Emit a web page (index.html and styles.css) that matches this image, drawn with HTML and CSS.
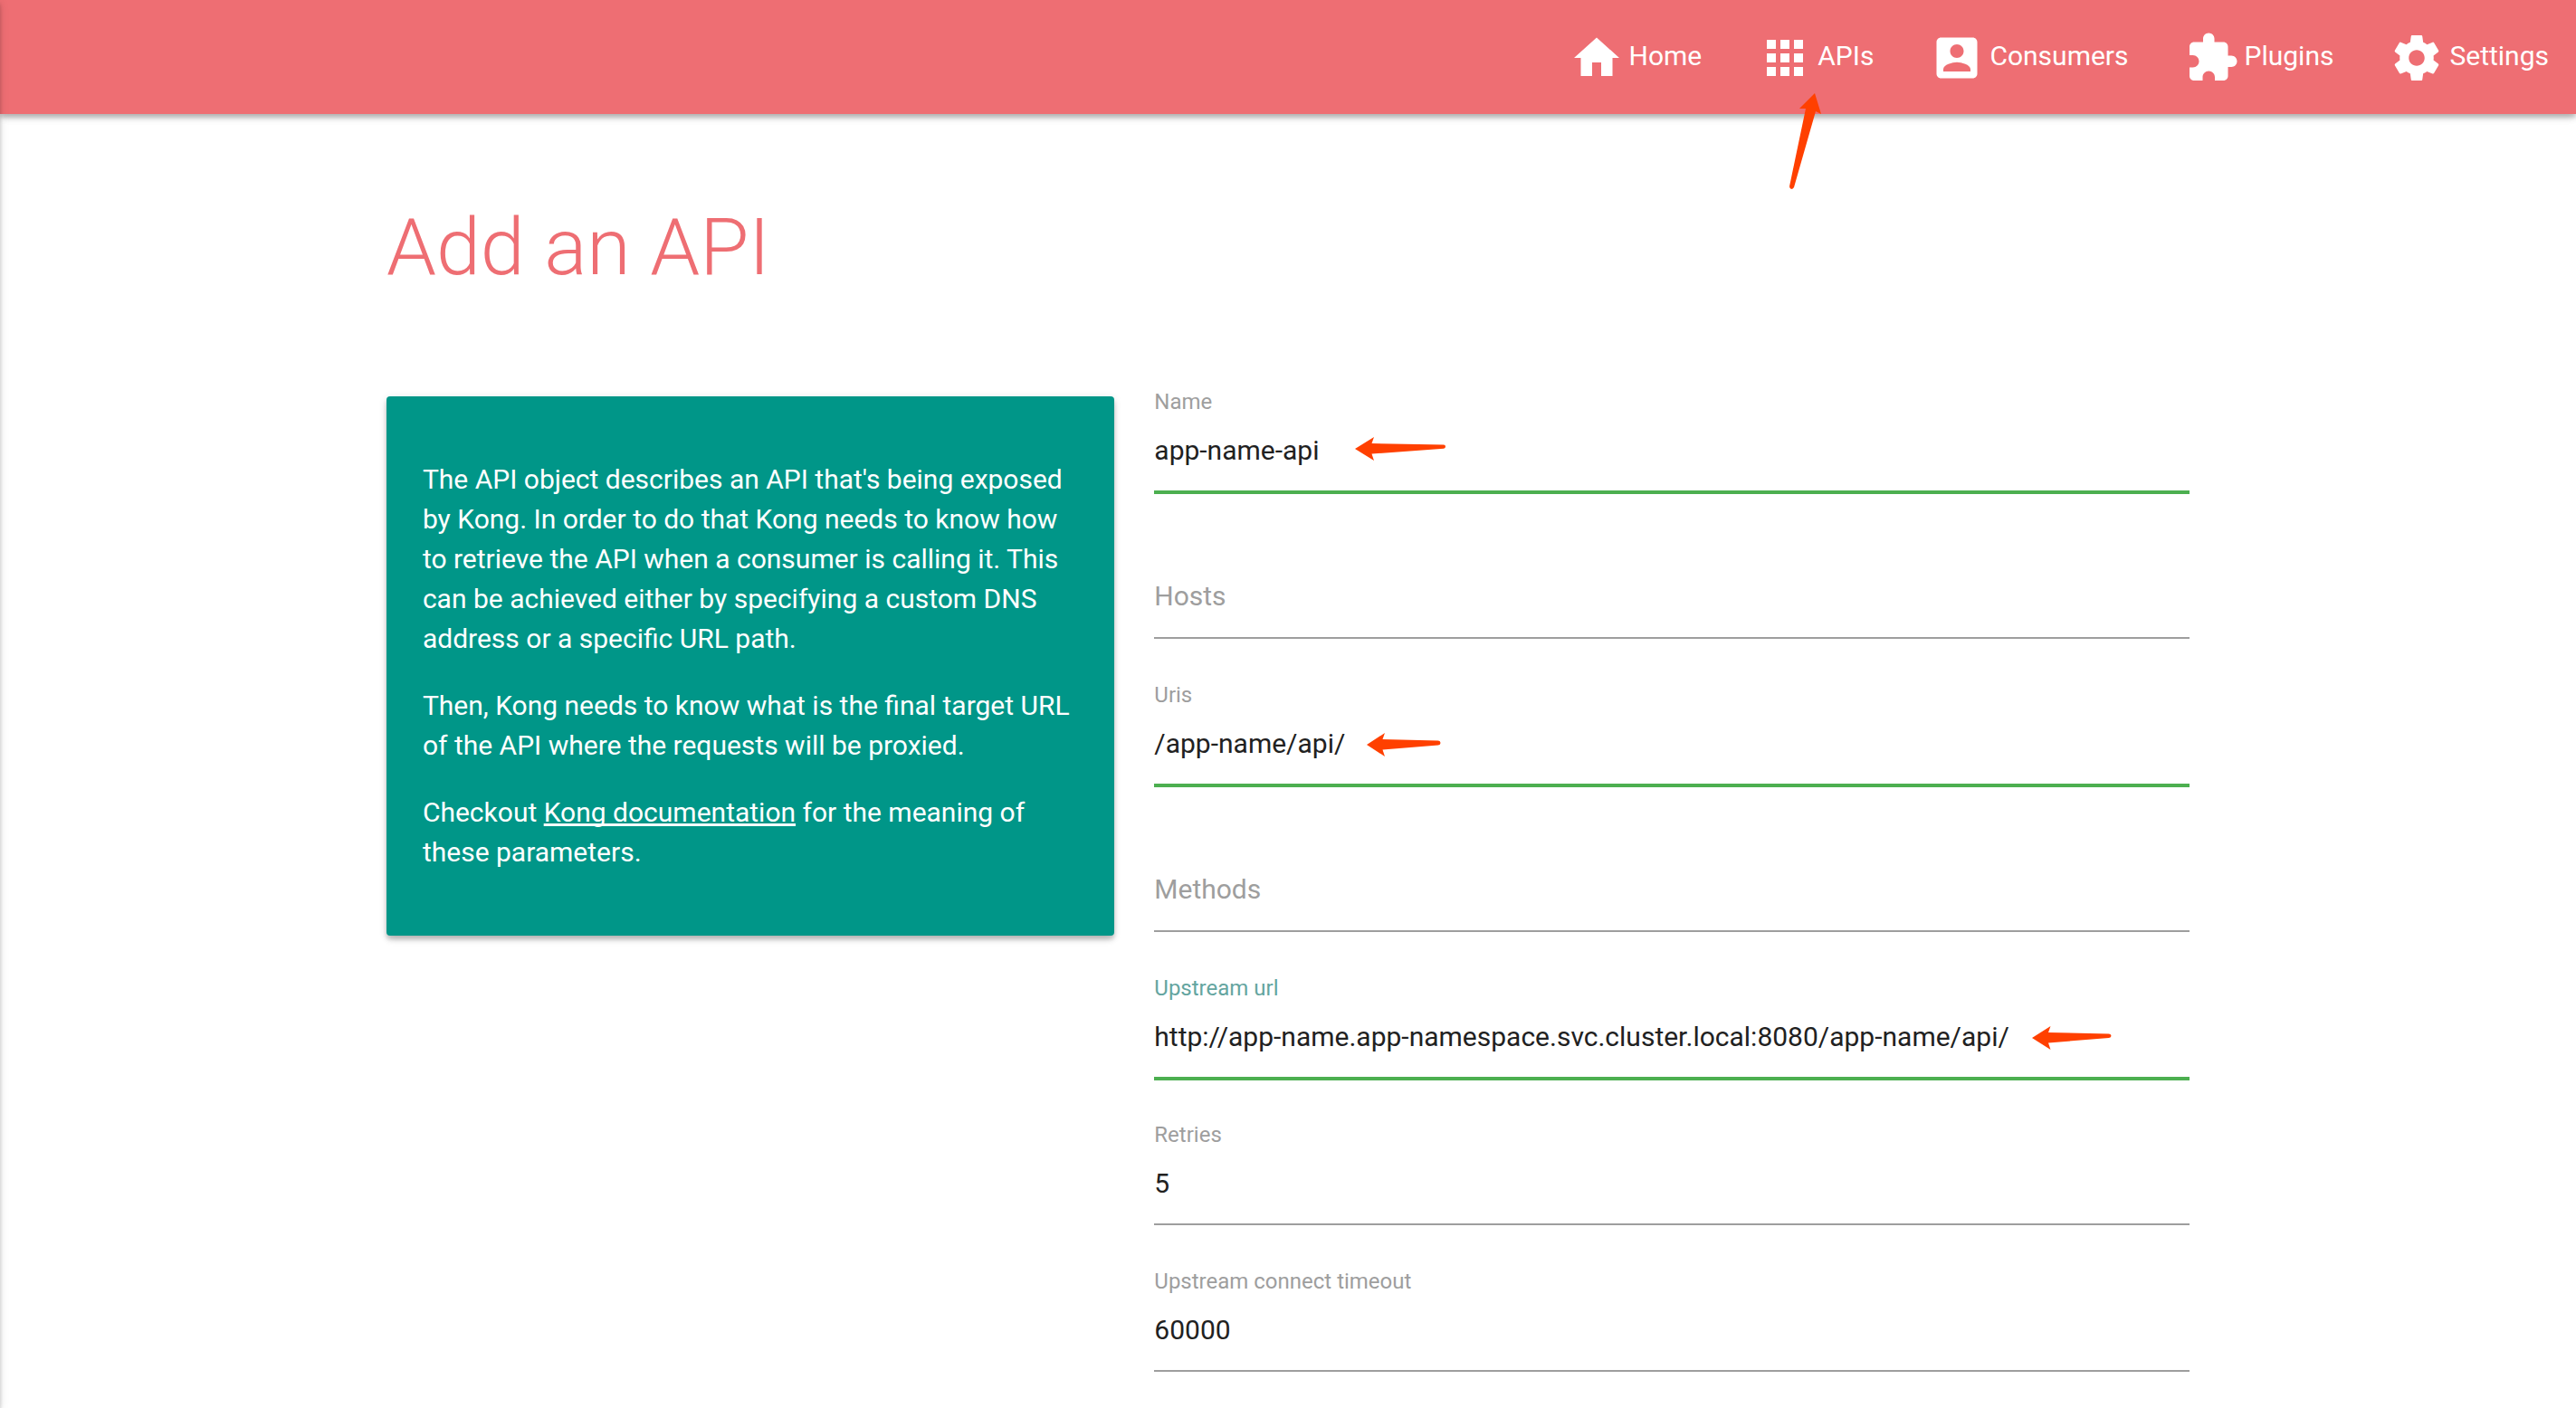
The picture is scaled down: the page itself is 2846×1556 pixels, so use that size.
FILE: index.html
```html
<!DOCTYPE html>
<html lang="en">
<head>
<meta charset="utf-8">
<meta name="viewport" content="width=device-width, initial-scale=1">
<title>Add an API</title>
<link rel="stylesheet" href="styles.css">
</head>
<body>
<header class="navbar">
  <nav class="nav" aria-label="Main">
    <a class="nav-link" href="#home">
      <svg class="icon" viewBox="0 0 24 24" aria-hidden="true"><path d="M10 20v-6h4v6h5v-8h3L12 3 2 12h3v8z"/></svg>
      <span class="nav-text">Home</span>
    </a>
    <a class="nav-link" href="#apis">
      <svg class="icon" viewBox="0 0 24 24" aria-hidden="true"><path d="M4 8h4V4H4v4zm6 12h4v-4h-4v4zm-6 0h4v-4H4v4zm0-6h4v-4H4v4zm6 0h4v-4h-4v4zm6-10v4h4V4h-4zm-6 4h4V4h-4v4zm6 6h4v-4h-4v4zm0 6h4v-4h-4v4z"/></svg>
      <span class="nav-text">APIs</span>
      <svg class="arrow arrow-nav" viewBox="0 0 36 106" aria-hidden="true"><path d="M28 0 L35 23 L29 20 L5 104 Q4 106 2 106 Q0 105 0 103 L18 17 L11 17 Z"/></svg>
    </a>
    <a class="nav-link" href="#consumers">
      <svg class="icon" viewBox="0 0 24 24" aria-hidden="true"><path d="M3 5v14c0 1.1.89 2 2 2h14c1.1 0 2-.9 2-2V5c0-1.1-.9-2-2-2H5c-1.11 0-2 .9-2 2zm12 4c0 1.66-1.34 3-3 3s-3-1.34-3-3 1.34-3 3-3 3 1.34 3 3zm-9 8c0-2 4-3.1 6-3.1s6 1.1 6 3.1v1H6v-1z"/></svg>
      <span class="nav-text">Consumers</span>
    </a>
    <a class="nav-link" href="#plugins">
      <svg class="icon" viewBox="0 0 24 24" aria-hidden="true"><path d="M20.5 11H19V7c0-1.1-.9-2-2-2h-4V3.5C13 2.12 11.88 1 10.5 1S8 2.12 8 3.5V5H4c-1.1 0-1.99.9-1.99 2v3.8H3.5c1.49 0 2.7 1.21 2.7 2.7s-1.21 2.7-2.7 2.7H2V20c0 1.1.9 2 2 2h3.8v-1.5c0-1.49 1.21-2.7 2.7-2.7 1.49 0 2.7 1.21 2.7 2.7V22H17c1.1 0 2-.9 2-2v-4h1.5c1.38 0 2.5-1.12 2.5-2.5S21.88 11 20.5 11z"/></svg>
      <span class="nav-text">Plugins</span>
    </a>
    <a class="nav-link" href="#settings">
      <svg class="icon" viewBox="0 0 24 24" aria-hidden="true"><path d="M19.43 12.98c.04-.32.07-.64.07-.98s-.03-.66-.07-.98l2.11-1.65c.19-.15.24-.42.12-.64l-2-3.46c-.12-.22-.39-.3-.61-.22l-2.49 1c-.52-.4-1.08-.73-1.69-.98l-.38-2.65C14.46 2.18 14.25 2 14 2h-4c-.25 0-.46.18-.49.42l-.38 2.65c-.61.25-1.17.59-1.69.98l-2.49-1c-.23-.09-.49 0-.61.22l-2 3.46c-.13.22-.07.49.12.64l2.11 1.65c-.04.32-.07.65-.07.98s.03.66.07.98l-2.11 1.65c-.19.15-.24.42-.12.64l2 3.46c.12.22.39.3.61.22l2.49-1c.52.4 1.08.73 1.69.98l.38 2.65c.03.24.24.42.49.42h4c.25 0 .46-.18.49-.42l.38-2.65c.61-.25 1.17-.59 1.69-.98l2.49 1c.23.09.49 0 .61-.22l2-3.46c.12-.22.07-.49-.12-.64l-2.11-1.65zM12 15.5c-1.93 0-3.5-1.57-3.5-3.5s1.57-3.5 3.5-3.5 3.5 1.57 3.5 3.5-1.57 3.5-3.5 3.5z"/></svg>
      <span class="nav-text">Settings</span>
    </a>
  </nav>
</header>
<div class="side-nav" aria-hidden="true"></div>

<main class="container">
  <h1 class="title">Add an API</h1>
  <div class="row">
    <aside class="col col-info">
      <div class="panel">
        <p>The API object describes an API that's being exposed by Kong. In order to do that Kong needs to know how to retrieve the API when a consumer is calling it. This can be achieved either by specifying a custom DNS address or a specific URL path.</p>
        <p>Then, Kong needs to know what is the final target URL of the API where the requests will be proxied.</p>
        <p>Checkout <a href="#docs">Kong documentation</a> for the meaning of these parameters.</p>
      </div>
    </aside>
    <form class="col col-form">
      <div class="field">
        <label class="label" for="name">Name</label>
        <input class="input valid" id="name" type="text" value="app-name-api">
        <svg class="arrow arrow-name" viewBox="0 0 100 26" aria-hidden="true"><path d="M0 13 L21 0 L18.500 7 L98 8.500 Q100 8.500 100 10.500 Q100 12.500 98 12.700 L18.500 18.500 L21 26 Z"/></svg>
      </div>
      <div class="field">
        <label class="label placeholder" for="hosts">Hosts</label>
        <input class="input" id="hosts" type="text">
      </div>
      <div class="field">
        <label class="label" for="uris">Uris</label>
        <input class="input valid" id="uris" type="text" value="/app-name/api/">
        <svg class="arrow arrow-uris" viewBox="0 0 82 26" aria-hidden="true"><path d="M0 13 L20 0 L17.500 7 L79 8.500 Q81.500 8.700 81.500 11 Q81.500 13.200 79 13.500 L17.500 18.500 L20 26 Z"/></svg>
      </div>
      <div class="field">
        <label class="label placeholder" for="methods">Methods</label>
        <input class="input" id="methods" type="text">
      </div>
      <div class="field">
        <label class="label active" for="upstream">Upstream url</label>
        <input class="input valid" id="upstream" type="text" value="http://app-name.app-namespace.svc.cluster.local:8080/app-name/api/">
        <svg class="arrow arrow-upstream" viewBox="0 0 88 26" aria-hidden="true"><path d="M0 13 L20.500 0 L18 7 L85 8.500 Q87.500 8.700 87.500 10.800 Q87.500 12.800 85 13 L18 18.500 L20.500 26 Z"/></svg>
      </div>
      <div class="field">
        <label class="label" for="retries">Retries</label>
        <input class="input" id="retries" type="text" value="5">
      </div>
      <div class="field">
        <label class="label" for="timeout">Upstream connect timeout</label>
        <input class="input" id="timeout" type="text" value="60000">
      </div>
    </form>
  </div>
</main>
</body>
</html>
```

FILE: styles.css
```css
*,
*::before,
*::after {
  box-sizing: border-box;
}

body {
  margin: 0;
  background: #fff;
  color: #212121;
  font: 400 30px/44px Roboto, "Liberation Sans", sans-serif;
}

.navbar,
.panel,
.side-nav {
  box-shadow: 0 4px 4px 0 rgba(0, 0, 0, .14), 0 2px 10px 0 rgba(0, 0, 0, .12), 0 6px 8px -2px rgba(0, 0, 0, .12);
}

.navbar {
  position: relative;
  padding: 34px 30px 32px;
  background: #ee6e73;
}

.nav {
  display: flex;
  justify-content: flex-end;
  gap: 62px;
}

.nav-link {
  position: relative;
  display: flex;
  align-items: center;
  gap: 6px;
  color: #fff;
  text-decoration: none;
}

.nav-text {
  padding-bottom: 5px;
}

.icon {
  width: 60px;
  height: 60px;
  fill: currentColor;
}

/* Off-canvas menu: closed, only its shadow reaches the page. */
.side-nav {
  position: fixed;
  top: 0;
  right: 100%;
  width: 480px;
  height: 100%;
}

.container {
  width: 70%;
  margin: 0 auto;
  padding-top: 99px;
}

.title {
  margin: 0 0 111px;
  color: #ee6e73;
  font-size: 88px;
  font-weight: 300;
  line-height: 96px;
}

.row {
  display: flex;
  align-items: flex-start;
  margin: 0 -22px;
}

.col {
  padding: 0 22px;
}

.col-info {
  width: calc(100% * 5 / 12);
  padding-top: 6px;
}

.col-form {
  display: grid;
  gap: 50px;
  width: calc(100% * 7 / 12);
}

.panel {
  padding: 40px;
  border-radius: 4px;
  background: #009688;
  color: #fff;
}

.panel p {
  margin: 30px 0;
}

.panel a {
  color: inherit;
  text-decoration-skip-ink: none;
}

.field {
  position: relative;
  display: grid;
  grid-template-rows: 24px 88px;
}

.label {
  grid-area: 1 / 1;
  color: #9e9e9e;
  font-size: 24px;
  line-height: 24px;
}

.label.active {
  color: #64a5a0;
}

/* An empty field shows its label on the input line. */
.label.placeholder {
  grid-row: 2;
  font-size: 30px;
  line-height: 82px;
  pointer-events: none;
}

.input {
  grid-area: 2 / 1;
  width: 100%;
  height: 88px;
  padding: 0 0 4px;
  border: 0;
  border-bottom: 2px solid #9e9e9e;
  border-radius: 0;
  outline: 0;
  background: transparent;
  color: #212121;
  font: inherit;
}

.input.valid {
  border-color: #4caf50;
  box-shadow: 0 2px 0 0 #4caf50;
}

.arrow {
  position: absolute;
  fill: #ff4000;
  pointer-events: none;
}

.arrow-nav {
  top: 69px;
  left: 35px;
  width: 36px;
  height: 106px;
}

.arrow-name {
  top: 51px;
  left: 222px;
  width: 100px;
  height: 26px;
}

.arrow-uris {
  top: 54px;
  left: 235px;
  width: 82px;
  height: 26px;
}

.arrow-upstream {
  top: 54px;
  left: 970px;
  width: 88px;
  height: 26px;
}
```
